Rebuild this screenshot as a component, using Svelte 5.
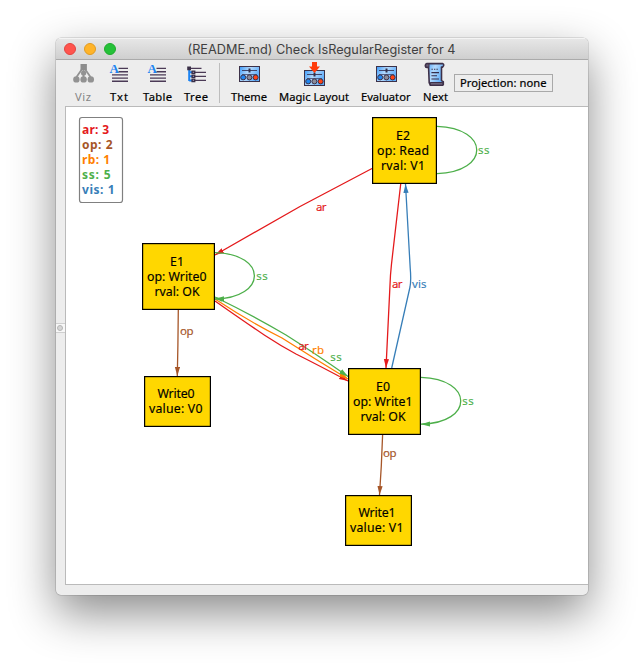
<script>
  const colors = { ar: '#e41a1c', op: '#a65628', rb: '#ff7f00', ss: '#4daf4a', vis: '#377eb8' };

  const views = [
    { icon: 'viz', text: 'Viz', w: 34, tw: 16, off: true },
    { icon: 'text', text: 'Txt', w: 38, tw: 18 },
    { icon: 'text', text: 'Table', w: 39, tw: 29 },
    { icon: 'tree', text: 'Tree', w: 38, tw: 24 }
  ];
  const actions = [
    { icon: 'panel', text: 'Theme', w: 48, tw: 36 },
    { icon: 'magic', text: 'Magic Layout', w: 82, tw: 70 },
    { icon: 'panel', text: 'Evaluator', w: 62, tw: 49.5 },
    { icon: 'next', text: 'Next', w: 37, tw: 25 }
  ];

  const legend = [
    ['ar', 3, 27], ['op', 2, 30.5], ['rb', 1, 28], ['ss', 5, 28.5], ['vis', 1, 32.5]
  ];

  const nodes = [
    { x: 372, y: 117, w: 65, h: 67, lines: [['E2', 396, 14, 140], ['op: Read', 377, 52, 155], ['rval: V1', 381, 44, 170]] },
    { x: 142, y: 243, w: 73, h: 67, lines: [['E1', 170, 14, 266], ['op: Write0', 147, 59.5, 281], ['rval: OK', 154.5, 45, 296]] },
    { x: 144, y: 376, w: 67, h: 51, lines: [['Write0', 157.5, 37, 398], ['value: V0', 149, 53.5, 413]] },
    { x: 348, y: 368, w: 73, h: 67, lines: [['E0', 376, 14, 391], ['op: Write1', 353, 59.5, 406], ['rval: OK', 360.5, 45, 421]] },
    { x: 345, y: 495, w: 67, h: 51, lines: [['Write1', 358.5, 37, 517], ['value: V1', 350, 53.5, 532]] }
  ];

  const edges = [
    { k: 'ar', d: 'M372 168.5 L300 206.5 L215 255', end: true },
    { k: 'ar', d: 'M400.7 184 L391.5 264 Q390.3 275 390 285 L386 368', end: true },
    { k: 'vis', d: 'M391.7 368 L410 287 Q411.3 280 410.2 268 L405.5 184', end: true },
    { k: 'ss', d: 'M437 126.3 C490 128 490 172 437 173.6' },
    { k: 'ar', d: 'M215 301 C258 331 272 341 296 354 Q320 366 348 381', end: true },
    { k: 'rb', d: 'M215 299 Q250 322 282 338 Q315 359 348 379', end: true },
    { k: 'ss', d: 'M215 252.6 C268 254 267 298 215 299', end: true },
    { k: 'ss', d: 'M215 297 Q252 315 286 335 Q316 354 348 376.5', end: true },
    { k: 'ss', d: 'M421 377.3 C474 379 474 423 421 424.2', end: true },
    { k: 'op', d: 'M178.3 310 L177.9 345 L177.3 376', end: true },
    { k: 'op', d: 'M382.6 435 L381.3 466 L379.5 495', end: true }
  ];

  const labels = [
    ['ar', 316, 211, 10.5], ['ar', 392, 288, 10.5], ['vis', 412, 288, 14.5],
    ['ss', 478, 154, 11.5], ['ss', 256.3, 280, 11.5], ['ss', 462.3, 405, 11.5],
    ['ar', 298.3, 350, 10.5], ['rb', 312, 354, 12], ['ss', 330.3, 361, 11.5],
    ['op', 180, 335, 13.5], ['op', 383, 457, 13.5]
  ];
</script>

{#snippet panel(dy)}
  <g transform="translate(0 {dy})">
    <rect x="2.5" y="3.5" width="20" height="15" fill="url(#sky)" stroke="#3c3148" />
    <path d="M5 7.5h15M5 11.5h15" stroke="#40456a" stroke-width="0.8" />
    <path d="M5 7.5h15" stroke="#40456a" />
    <path d="M12.5 5.5v4" stroke="#30304c" stroke-width="2" />
    <circle cx="6.2" cy="14.4" r="2.5" fill="#1f86f2" stroke="#3c3148" />
    <circle cx="12.4" cy="14.4" r="2.5" fill="#8b8b99" stroke="#3c3148" />
    <circle cx="18.6" cy="14.4" r="2.5" fill="#ff4316" stroke="#3c3148" />
  </g>
{/snippet}

{#snippet tool(t)}
  <button class="tool" class:off={t.off} style:width="{t.w}px">
    <svg class="icon" width="25" height="26" viewBox="0 0 25 26">
      {#if t.icon === 'viz'}
        <path d="M12.5 7v10M12.5 7L5.5 17M12.5 7l7 10" stroke="#929292" stroke-width="1.8" />
        <rect x="9.5" y="4" width="6.4" height="6" fill="#8d8d8d" />
        <circle cx="5.4" cy="19.4" r="3.2" fill="#929292" />
        <circle cx="12.6" cy="19.4" r="3.2" fill="#929292" />
        <circle cx="19.8" cy="19.4" r="3.2" fill="#929292" />
        <circle cx="12.6" cy="13" r="2.6" fill="#929292" />
      {:else if t.icon === 'text'}
        <text x="2.6" y="12.6" class="cap">A</text>
        <path d="M11.5 8.4h9.5M11.5 11.7h9.5M5 14.9h16M5 18.1h16M5 21.3h16" stroke="#4b3a56" stroke-width="1.4" />
      {:else if t.icon === 'tree'}
        <path d="M5.2 8v13M5.2 12.3h4M5.2 16.3h4M5.2 20.5h4" stroke="#1b83f2" stroke-width="2" fill="none" />
        <path d="M6 8.3h12.5M11 12.3h12M11 16.3h12M11 20.4h12" stroke="#4b3a56" stroke-width="1.3" transform="translate(-1 0)" />
        <path d="M3.2 6.5h3.8v3.8H3.2zM7.4 10.5h4v3.6h-4zM7.4 14.5h4v3.6h-4zM7.4 18.6h4v3.6h-4z" fill="#3b3048" />
        <path d="M8.8 11.7H10v1.2H8.8zM8.8 15.7H10v1.2H8.8zM8.8 19.8H10V21H8.8z" fill="#8f86a0" />
      {:else if t.icon === 'panel'}
        {@render panel(3)}
      {:else if t.icon === 'magic'}
        {@render panel(7)}
        <path d="M10 2h5v4.6h3L12.5 13 7 6.6h3z" fill="#ff3c0a" />
      {:else}
        <g transform="translate(-1 0.6)">
          <path d="M5 3h15.5q2.5 1 0 3.5h-1V20l1.8 1v3q-.6 1-2 1H8.5L7.2 22 6.6 7 3.8 6.5Q2.5 4 5 3z" fill="url(#sky)" stroke="#3e3048" stroke-width="1.6" stroke-linejoin="round" />
          <path d="M3.8 3.4L7 3.2v3.4l-3.2-.2zM8.2 21.9h12.6v2.6H8.6z" fill="#6b6077" stroke="#3e3048" />
          <path d="M9.5 8.7h1.3M12 8.7h1.3M14.5 8.7h1.3M9.4 12h7.6M9.4 15.2h5.6M9.4 18.4h7.6" stroke="#352e4c" stroke-width="1.1" />
        </g>
      {/if}
    </svg>
    <svg class="label" width={t.tw + 2} height="16">
      <text x="1" y="12" textLength={t.tw}>{t.text}</text>
    </svg>
  </button>
{/snippet}

<div class="desktop">
  <svg width="0" height="0" class="defs">
    <defs>
      <linearGradient id="sky" x1="0" y1="0" x2="1" y2="0.4">
        <stop offset="0" stop-color="#3c9bfa" />
        <stop offset="0.5" stop-color="#b4d9fc" />
        <stop offset="1" stop-color="#5fadfa" />
      </linearGradient>
    </defs>
  </svg>
  <div class="window">
    <header>
      <div class="lights"><i class="close"></i><i class="min"></i><i class="max"></i></div>
      <svg class="title" width="276" height="20">
        <text x="1.5" y="15" textLength="268">(README.md) Check IsRegularRegister for 4</text>
      </svg>
    </header>
    <nav>
      {#each views as t}{@render tool(t)}{/each}
      <span class="sep"></span>
      {#each actions as t}{@render tool(t)}{/each}
      <button class="projection">
        <svg width="89" height="16"><text x="1" y="12" textLength="86.5">Projection: none</text></svg>
      </button>
    </nav>
    <main>
      <div class="split"><span><i></i></span></div>
      <svg class="graph" width="522" height="477" viewBox="66 107 522 477">
        <defs>
          {#each Object.entries(colors) as [k, c]}
            <marker id="tip-{k}" viewBox="0 0 9 6" refX="9" refY="3" markerWidth="9" markerHeight="6" markerUnits="userSpaceOnUse" orient="auto">
              <path d="M0 .4L9 3 0 5.6z" fill={c} />
            </marker>
          {/each}
        </defs>
        <rect x="79.5" y="117.5" width="43" height="85" rx="2.5" fill="#fff" stroke="#808080" stroke-width="1.2" />
        {#each legend as [k, n, w], i}
          <text class="key" x="82" y={134 + i * 15} fill={colors[k]} textLength={w}>{k}: {n}</text>
        {/each}
        {#each edges as e}
          <path d={e.d} fill="none" stroke={colors[e.k]} stroke-width="1.3" marker-end={e.end ? `url(#tip-${e.k})` : null} />
        {/each}
        <path d="M215 297.2l8.5 1-2 3.6z" fill={colors.ss} />
        {#each labels as [k, x, y, w]}
          <text class="edge" {x} {y} fill={colors[k]} stroke={colors[k]} textLength={w}>{k}</text>
        {/each}
        {#each nodes as n}
          <rect x={n.x + 0.6} y={n.y + 0.6} width={n.w - 1.2} height={n.h - 1.2} fill="#ffd700" stroke="#000" stroke-width="1.2" />
          {#each n.lines as [s, x, w, y]}
            <text class="node" {x} {y} textLength={w}>{s}</text>
          {/each}
        {/each}
      </svg>
    </main>
    <footer></footer>
  </div>
</div>

<style>
  :global(body) { margin: 0; background: #fff; }
  .desktop {
    box-sizing: border-box;
    width: 644px;
    height: 669px;
    padding: 38px 0 0 56px;
    overflow: hidden;
    background: #fff;
    font-family: "Noto Sans", "Open Sans", sans-serif;
  }
  .defs { position: absolute; }
  .window {
    box-sizing: border-box;
    width: 532px;
    height: 557px;
    display: flex;
    flex-direction: column;
    overflow: hidden;
    background: #ededed;
    border-radius: 5px;
    box-shadow: 0 0 0 0.6px rgba(0, 0, 0, 0.2), 0 18px 46px rgba(0, 0, 0, 0.46);
  }
  header {
    box-sizing: border-box;
    height: 22px;
    display: flex;
    align-items: center;
    border-bottom: 1px solid #aaa;
    border-top: 1px solid #f4f4f4;
    background: linear-gradient(#e6e6e6, #cfcfcf);
  }
  .lights { display: flex; gap: 8px; padding-left: 8px; width: 122px; }
  .lights i { box-sizing: border-box; width: 12px; height: 12px; border-radius: 50%; }
  .close { background: #ff544d; border: 1px solid #e2443f; }
  .min { background: #ffb429; border: 1px solid #e09b22; }
  .max { background: #25c138; border: 1px solid #1fab2c; }
  .title { overflow: visible; font-family: Inter, Roboto, sans-serif; font-size: 12.7px; fill: #404040; }
  nav {
    box-sizing: border-box;
    height: 46px;
    padding-left: 10px;
    display: flex;
  }
  button { border: 0; padding: 0; background: none; font: inherit; }
  .tool { display: flex; flex-direction: column; align-items: center; justify-content: flex-start; flex: none; }
  .icon { display: block; flex: none; }
  .label { display: block; flex: none; overflow: visible; margin-top: 3px; font-size: 11.2px; fill: #000; stroke: #000; stroke-width: 0.2px; }
  .off .label { fill: #858585; stroke: none; }
  .cap { font: bold 13px "Liberation Serif", serif; fill: #1b83f2; }
  .sep { width: 1px; height: 40px; margin: 3px 5px 0 4px; background: #bdbdbd; }
  .projection {
    box-sizing: border-box;
    width: 99px;
    height: 18px;
    margin-top: 14px;
    display: flex;
    align-items: center;
    justify-content: center;
    border: 1px solid #a9a9a9;
    background: #ededed;
    font-size: 11.2px;
    stroke: #000;
    stroke-width: 0.2px;
  }
  .projection svg { overflow: visible; flex: none; }
  main { display: flex; height: 479px; flex: none; }
  .split { width: 9px; padding-top: 217px; box-sizing: border-box; }
  .split span {
    box-sizing: border-box;
    display: flex;
    align-items: center;
    padding-left: 1px;
    height: 10px;
    border: solid #cfcfcf;
    border-width: 1px 0;
    background: #f7f7f7;
  }
  .split i { box-sizing: border-box; width: 6px; height: 6px; border: 1px solid #b5b5b5; border-radius: 50%; background: #d6d6d6; }
  .graph { display: block; background: #fff; border: 1px solid #bababa; border-right: 0; }
  .key { font-size: 12px; font-weight: 700; }
  .edge { font-size: 11.5px; stroke-width: 0.15px; }
  .node { font-size: 12.3px; fill: #000; stroke: #000; stroke-width: 0.15px; }
  footer { flex: 1; }
</style>
